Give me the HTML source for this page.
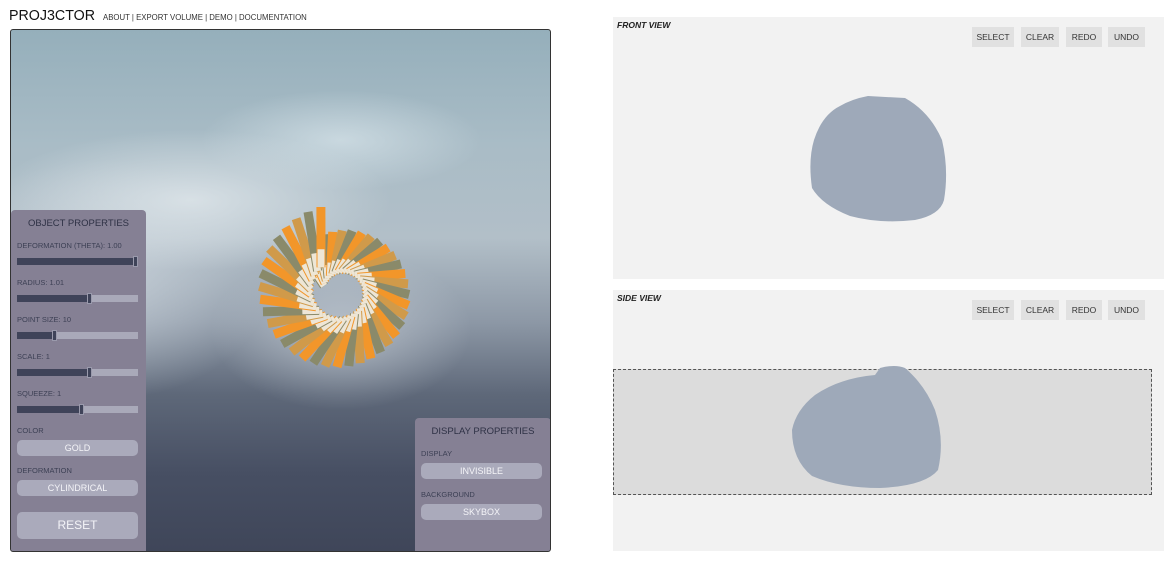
<!DOCTYPE html>
<html><head><meta charset="utf-8"><style>
*{margin:0;padding:0;box-sizing:border-box}
body{width:1164px;height:561px;background:#fff;font-family:"Liberation Sans",sans-serif;position:relative;overflow:hidden}
.abs{position:absolute}
#title{left:9px;top:7px;font-size:15px;color:#111;transform:scaleX(0.95);transform-origin:left}
#nav{left:103px;top:13px;font-size:7.8px;color:#333;white-space:nowrap}
#vp{left:10px;top:29px;width:541px;height:523px;border:1.5px solid #333;border-radius:3px;overflow:hidden;
background:
radial-gradient(ellipse 130px 80px at 330px 300px,rgba(200,208,216,.7),rgba(200,208,216,0)),
radial-gradient(ellipse 200px 70px at 180px 170px,rgba(225,232,236,.8),rgba(225,232,236,0)),
radial-gradient(ellipse 140px 50px at 330px 110px,rgba(215,228,234,.7),rgba(215,228,234,0)),
radial-gradient(ellipse 170px 120px at 90px 250px,rgba(205,214,222,.8),rgba(205,214,222,0)),
linear-gradient(180deg,#95afbb 0%,#a9bcc6 22%,#b2bfc8 40%,#8d98a6 56%,#5e6879 70%,#474f63 85%,#3f4659 100%)}
.panel{background:#858094;position:absolute;border-radius:4px 4px 0 0}
.ph{font-size:9.5px;color:#2e3145;text-align:center}
.lbl{position:absolute;font-size:7.5px;color:#3d4055;left:6px}
.sl{position:absolute;left:6px;width:121px;height:7px;background:#a9a9b9}
.sl i{position:absolute;left:0;top:0;height:7px;background:#3f4359}
.sl b{position:absolute;top:-2px;width:5px;height:11px;background:#3f4359;border:1px solid #9a9aac}
.btn{position:absolute;left:6px;width:121px;height:16px;background:#aaaabb;border-radius:5px;color:#f4f4f8;font-size:9px;text-align:center;line-height:16px}
.view{position:absolute;left:613px;width:551px;background:#f2f2f2}
.vt{position:absolute;left:4px;top:3px;font-size:8.5px;font-style:italic;font-weight:bold;color:#222}
.vb{position:absolute;top:10px;height:20px;background:#e1e1e1;font-size:8.5px;color:#333;line-height:20px;text-align:center}
</style></head><body>
<div id="title" class="abs">PROJ3CTOR</div>
<div id="nav" class="abs">ABOUT | EXPORT VOLUME | DEMO | DOCUMENTATION</div>
<div id="vp" class="abs">
<svg id="sp" width="541" height="523" style="position:absolute;left:0;top:0"></svg>
<div class="panel" style="left:0;top:180px;width:135px;height:345px">
<div class="ph" style="margin-top:8px">OBJECT PROPERTIES</div>
<div class="lbl" style="top:31px">DEFORMATION (THETA): 1.00</div>
<div class="sl" style="top:48px"><i style="width:118px"></i><b style="left:116px"></b></div>
<div class="lbl" style="top:68px">RADIUS: 1.01</div>
<div class="sl" style="top:85px"><i style="width:72px"></i><b style="left:70px"></b></div>
<div class="lbl" style="top:105px">POINT SIZE: 10</div>
<div class="sl" style="top:122px"><i style="width:38px"></i><b style="left:35px"></b></div>
<div class="lbl" style="top:142px">SCALE: 1</div>
<div class="sl" style="top:159px"><i style="width:72px"></i><b style="left:70px"></b></div>
<div class="lbl" style="top:179px">SQUEEZE: 1</div>
<div class="sl" style="top:196px"><i style="width:64px"></i><b style="left:62px"></b></div>
<div class="lbl" style="top:216px">COLOR</div>
<div class="btn" style="top:230px">GOLD</div>
<div class="lbl" style="top:256px">DEFORMATION</div>
<div class="btn" style="top:270px">CYLINDRICAL</div>
<div class="btn" style="top:302px;height:27px;line-height:27px;font-size:12px">RESET</div>
</div>
<div class="panel" style="left:404px;top:388px;width:136px;height:140px">
<div class="ph" style="margin-top:8px">DISPLAY PROPERTIES</div>
<div class="lbl" style="top:31px">DISPLAY</div>
<div class="btn" style="top:45px">INVISIBLE</div>
<div class="lbl" style="top:72px">BACKGROUND</div>
<div class="btn" style="top:86px">SKYBOX</div>
</div>
</div>

<div class="view" style="top:17px;height:262px">
<div class="vt">FRONT VIEW</div>
<div class="vb" style="left:359px;width:42px">SELECT</div>
<div class="vb" style="left:408px;width:38px">CLEAR</div>
<div class="vb" style="left:453px;width:36px">REDO</div>
<div class="vb" style="left:495px;width:37px">UNDO</div>
</div>
<div class="view" style="top:290px;height:261px">
<div class="vt">SIDE VIEW</div>
<div class="vb" style="left:359px;width:42px">SELECT</div>
<div class="vb" style="left:408px;width:38px">CLEAR</div>
<div class="vb" style="left:453px;width:36px">REDO</div>
<div class="vb" style="left:495px;width:37px">UNDO</div>
</div>
<div class="abs" style="left:613px;top:369px;width:539px;height:126px;background:#dcdcdc;border:1px dashed #555"></div>
<svg class="abs" style="left:0;top:0" width="1164" height="561">
<path fill="#9ea9b9" d="M868 96 L905 98 Q930 112 942 140 Q949 170 944 200 Q940 215 915 220 Q880 224 850 216 Q822 205 812 188 Q808 160 814 140 Q822 115 840 106 Q852 99 868 96 Z"/>
<path fill="#9ea9b9" d="M880 368 Q895 364 905 368 Q925 385 935 410 Q945 440 938 470 Q925 486 880 488 Q840 488 812 476 Q792 460 792 430 Q796 410 815 395 Q840 378 875 375 Z"/>
</svg>
<script>
var s=document.getElementById('sp'),h='';
var cx=330,cy=262,n=44;
for(var i=0;i<n;i++){
 var t=i/n, a=(-160+t*400)*Math.PI/180;
 var r1=18+t*14, r2=r1+40+t*16;
 var x1=cx+r1*Math.cos(a),y1=cy+r1*Math.sin(a),x2=cx+r2*Math.cos(a+0.45),y2=cy+r2*Math.sin(a+0.45);
 var c=i%3==0?'#8a8a6a':(i%3==1?'#f2962a':'#d09a4a');
 h+='<line x1="'+x1+'" y1="'+y1+'" x2="'+x2+'" y2="'+y2+'" stroke="'+c+'" stroke-width="9"/>';
 h+='<line x1="'+x1+'" y1="'+y1+'" x2="'+(x1+(x2-x1)*0.3)+'" y2="'+(y1+(y2-y1)*0.3)+'" stroke="#eee6d6" stroke-width="7"/>';
}
s.innerHTML=h;
</script>
</body></html>
